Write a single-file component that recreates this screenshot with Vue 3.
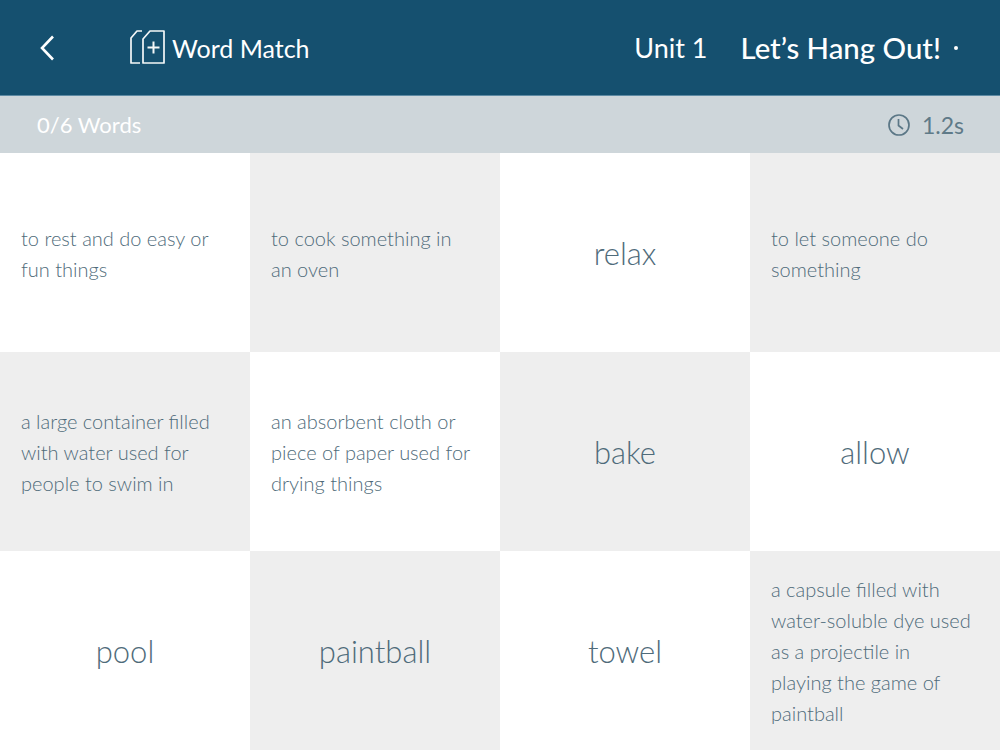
<script setup>
const cards = [
  { text: 'to rest and do easy or fun things', term: false, grey: false },
  { text: 'to cook something in an oven', term: false, grey: true },
  { text: 'relax', term: true, grey: false },
  { text: 'to let someone do something', term: false, grey: true },
  { text: 'a large container filled with water used for people to swim in', term: false, grey: true },
  { text: 'an absorbent cloth or piece of paper used for drying things', term: false, grey: false },
  { text: 'bake', term: true, grey: true },
  { text: 'allow', term: true, grey: false },
  { text: 'pool', term: true, grey: false },
  { text: 'paintball', term: true, grey: true },
  { text: 'towel', term: true, grey: false },
  { text: 'a capsule filled with water-soluble dye used as a projectile in playing the game of paintball', term: false, grey: true },
]
</script>

<template>
  <div class="page">
    <header class="top">
      <svg class="back" width="18" height="28" viewBox="0 0 18 28"><path d="M15 2.5 L4 14 L15 25.5" fill="none" stroke="#fff" stroke-width="2.6"/></svg>
      <svg class="logo" width="38" height="38" viewBox="0 0 38 38" fill="none" stroke="#f4f7f8" stroke-width="1.7" stroke-linejoin="round">
        <path d="M14 2 H9 L3 9 V34 H12"/>
        <path d="M15 10 L22 2 H36 V34 H15 Z"/>
        <path d="M25.5 12.5 V24.5 M19.5 18.5 H31.5" stroke-width="2"/>
      </svg>
      <span class="title">Word Match</span>
      <span class="unit">Unit 1</span>
      <strong class="name">Let’s Hang Out!</strong>
      <span class="dot"></span>
    </header>
    <div class="status">
      <span class="count">0/6 Words</span>
      <svg width="24" height="24" viewBox="0 0 24 24" fill="none" stroke="#5b7786" stroke-width="1.7"><circle cx="12" cy="12" r="10"/><path d="M11.5 6 V12.5 L16 16"/></svg>
      <span class="time">1.2s</span>
    </div>
    <main class="grid">
      <div v-for="c in cards" :key="c.text" class="card" :class="{ grey: c.grey, term: c.term }">{{ c.text }}</div>
    </main>
  </div>
</template>

<style>
html, body { margin: 0; background: #fff; }
</style>

<style scoped>
.page { width: 1000px; height: 750px; overflow: hidden; font-family: Lato, "Noto Sans", sans-serif; font-weight: 300; color: #4f6b7a; }
.top { height: 96px; background: #15506f; border-bottom: 1px solid #5d8aa3; color: #fff; display: flex; align-items: center; padding: 0 42px 0 38px; box-sizing: border-box; }
.back { margin-right: 72px; }
.logo { margin-right: 6px; }
.title { font-size: 25px; font-weight: 400; }
.unit { margin-left: auto; font-size: 27px; font-weight: 400; }
.name { margin-left: 33px; font-size: 29.4px; font-weight: 500; }
.dot { width: 4px; height: 4px; border-radius: 50%; background: #fff; margin-left: 13px; }
.status { height: 57px; background: #ced6da; display: flex; align-items: center; padding: 0 36px 0 37px; gap: 11px; }
.count { color: #fff; font-size: 22px; margin-right: auto; font-weight: 400; }
.time { font-size: 23px; font-weight: 400; color: #5f7a88; }
.grid { display: grid; grid-template-columns: repeat(4, 250px); grid-auto-rows: 199px; }
.card { display: flex; align-items: center; padding: 2px 27px 0 21px; box-sizing: border-box; font-size: 20px; line-height: 31px; background: #fff; }
.card.grey { background: #eeeeee; }
.card.term { justify-content: center; padding: 2px 21px 0; font-size: 31px; }
</style>
